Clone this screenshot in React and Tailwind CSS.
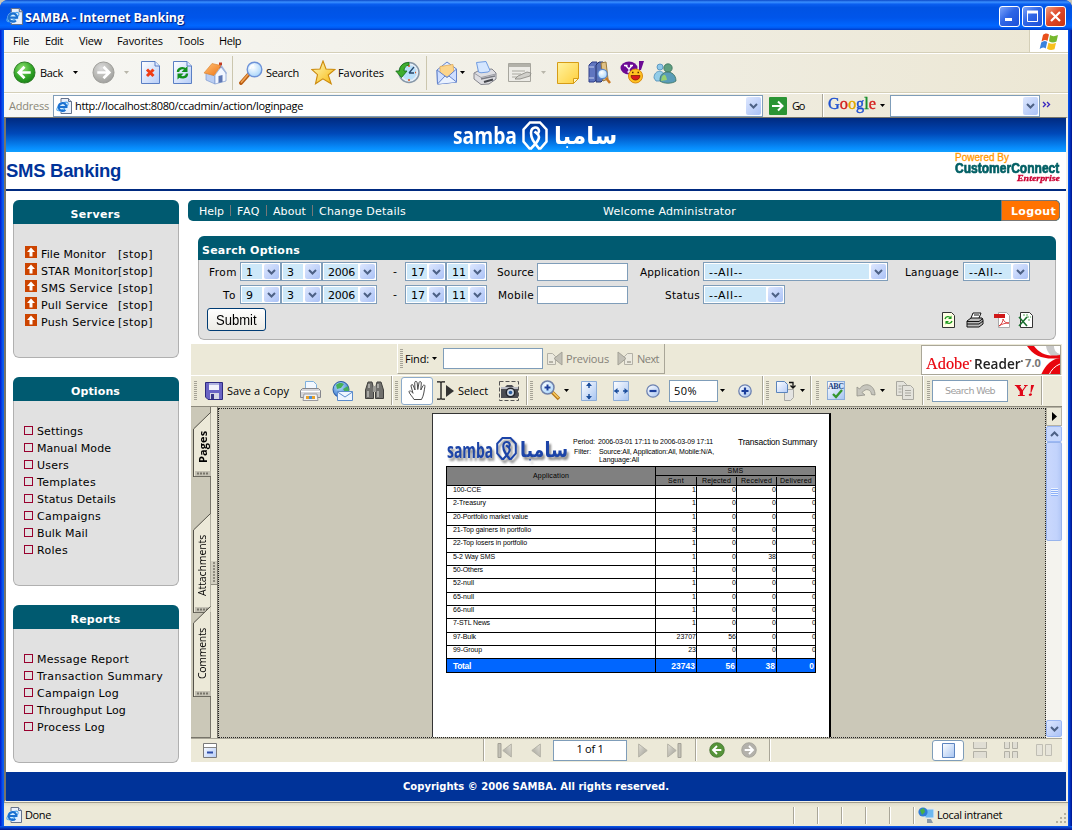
import { useLayoutEffect, useRef, useState } from "react";

/* One-line label whose tracking is adjusted so that it fills exactly w pixels. */
function Fit({ w, low, className = "", children }) {
  const ref = useRef(null);
  const [ls, setLs] = useState(0);
  useLayoutEffect(() => {
    const n = ref.current.textContent.length;
    const natural = ref.current.getBoundingClientRect().width - ls * n;
    setLs((w - natural) / n);
  }, [w]);
  return (
    <span className={"block shrink-0 whitespace-pre " + (low ? "pt-[2px]" : "")} style={{ width: w }}>
      <span ref={ref} className={"block w-max whitespace-pre " + className} style={{ letterSpacing: ls }}>
        {children}
      </span>
    </span>
  );
}

/* Wordmark that is condensed or widened horizontally to w pixels. */
function Squeeze({ w, className = "", children }) {
  const ref = useRef(null);
  const [k, setK] = useState(1);
  useLayoutEffect(() => {
    setK(w / ref.current.offsetWidth);
  }, [w]);
  return (
    <span className="block shrink-0 whitespace-pre" style={{ width: w }}>
      <span ref={ref} className={"block w-max origin-left whitespace-pre " + className} style={{ transform: `scaleX(${k})` }}>
        {children}
      </span>
    </span>
  );
}

const Svg = ({ w, h, vb, className = "", children }) => (
  <svg width={w} height={h} viewBox={vb || `0 0 ${w} ${h}`} className={"block shrink-0 " + className} fill="none">
    {children}
  </svg>
);

const Defs = () => (
  <svg width="0" height="0" className="absolute">
    <defs>
      <radialGradient id="gGreen" cx=".4" cy=".3" r=".8"><stop offset="0" stopColor="#8fe070" /><stop offset=".55" stopColor="#35a82a" /><stop offset="1" stopColor="#127a12" /></radialGradient>
      <radialGradient id="gGray" cx=".4" cy=".3" r=".8"><stop offset="0" stopColor="#dcdcdc" /><stop offset=".6" stopColor="#b4b4b0" /><stop offset="1" stopColor="#999" /></radialGradient>
      <linearGradient id="gPage" x1="0" y1="0" x2="1" y2="1"><stop offset="0" stopColor="#fff" /><stop offset="1" stopColor="#b6cdf8" /></linearGradient>
      <linearGradient id="gFit" x1="0" y1="0" x2="1" y2="1"><stop offset="0" stopColor="#fff" /><stop offset="1" stopColor="#a6c4f2" /></linearGradient>
      <linearGradient id="gRoof" x1="0" y1="0" x2="1" y2="1"><stop offset="0" stopColor="#ffc277" /><stop offset="1" stopColor="#ef7414" /></linearGradient>
      <linearGradient id="gStar" x1="0" y1="0" x2="1" y2="1"><stop offset="0" stopColor="#fffbc0" /><stop offset="1" stopColor="#f7b70a" /></linearGradient>
      <radialGradient id="gLens" cx=".4" cy=".35" r=".7"><stop offset="0" stopColor="#fff" /><stop offset="1" stopColor="#a4d4fb" /></radialGradient>
      <linearGradient id="gNote" x1="0" y1="0" x2="1" y2="1"><stop offset="0" stopColor="#fff3a0" /><stop offset="1" stopColor="#ffcf3c" /></linearGradient>
      <linearGradient id="gGrayTri" x1="0" y1="0" x2="1" y2="1"><stop offset="0" stopColor="#e4e2d8" /><stop offset="1" stopColor="#9d9c94" /></linearGradient>
      <radialGradient id="gGlobe" cx=".4" cy=".3" r=".8"><stop offset="0" stopColor="#bfe6ff" /><stop offset="1" stopColor="#1c5fc4" /></radialGradient>
    </defs>
  </svg>
);

const Caret = ({ className = "", c = "#000" }) => (
  <Svg w={5} h={3} className={className}><path d="M0 0h5L2.500 3z" fill={c} /></Svg>
);
const Grip = ({ className = "" }) => (
  <div className={"h-[20px] w-[3px] shrink-0 bg-[repeating-linear-gradient(to_bottom,#a5a296_0_1px,#ece9d8_1px_2px)] " + className} />
);
const Sep = ({ className = "" }) => <div className={"w-[2px] shrink-0 self-stretch border-l border-r border-l-[#a9a698] border-r-white " + className} />;

const IeIcon = ({ s = 16, className = "" }) => (
  <Svg w={s} h={s} vb="0 0 16 16" className={className}>
    <path d="M5 .5h7.500l3 3v12H5z" fill="#e9f0fc" stroke="#64728c" />
    <path d="M12.500.5v3h3" stroke="#64728c" fill="#c9d8f2" />
    <circle cx="6.500" cy="9" r="5.200" fill="#d9efff" />
    <ellipse cx="6.500" cy="8.500" rx="6.500" ry="2.600" transform="rotate(-35 6.500 8.500)" stroke="#4fa8ee" strokeWidth="1.100" />
    <path d="M3 9h7.400a3.900 3.900 0 1 0-1.100 2.700" stroke="#1b70d0" strokeWidth="2.100" />
  </Svg>
);
const CircleArrow = ({ s, fill, ring, left, className = "" }) => (
  <Svg w={s} h={s} vb="0 0 24 24" className={className}>
    <circle cx="12" cy="12" r="11" fill={fill} stroke={ring} />
    <g transform={left ? "" : "matrix(-1 0 0 1 24 0)"}><path d="M18.500 12H7M12 6l-6 6 6 6" stroke="#fff" strokeWidth="2.800" /></g>
  </Svg>
);
const PageBase = () => (
  <>
    <path d="M.5.5h13.500l4.500 4.500v17.500h-18z" fill="url(#gPage)" stroke="#5a7fc4" />
    <path d="M14 .5v4.500h4.500" fill="#dce8ff" stroke="#5a7fc4" />
  </>
);
const Home = ({ className }) => (
  <Svg w={24} h={24} className={className}>
    <path d="M16 1.500h3v6h-3z" fill="#c23a22" />
    <path d="M3 12l9 3v8l-9-4z" fill="#b9cdf2" stroke="#7d99ce" strokeWidth=".7" />
    <path d="M12 14l6-8 5 6v8l-11 3z" fill="#f3f7ff" stroke="#7d99ce" strokeWidth=".7" />
    <path d="M15.500 15l4-1v7l-4 1z" fill="#5f78b4" />
    <path d="M1 12L9 2.500 18 4.500 11 14.500z" fill="url(#gRoof)" stroke="#d9822e" strokeWidth=".6" />
    <path d="M18 4.500l5.500 8" stroke="#9fb4dc" strokeWidth="1.500" />
  </Svg>
);
const Lens = ({ className }) => (
  <Svg w={24} h={24} className={className}>
    <path d="M10 13l-8 9" stroke="#b85c12" strokeWidth="3.800" strokeLinecap="round" />
    <path d="M9.500 13l-7 8" stroke="#f2a452" strokeWidth="1.700" strokeLinecap="round" />
    <circle cx="15.500" cy="8.500" r="7.300" fill="url(#gLens)" stroke="#6d92d8" strokeWidth="1.400" />
    <path d="M11 8a4.500 4.500 0 0 1 4-4" stroke="#fff" strokeWidth="1.500" />
  </Svg>
);
const Star = ({ className }) => (
  <Svg w={25} h={25} className={className}>
    <path d="M12 1l3 8 9 .4-6.800 5.600 3 8.800-8.300-5-7.400 5 2-9.200L.8 9.400l8.200-.4z" fill="url(#gStar)" stroke="#cc8a0c" strokeWidth="1.100" />
  </Svg>
);
const History = ({ className }) => (
  <Svg w={25} h={23} className={className}>
    <circle cx="14" cy="11.500" r="10" fill="#e8f4ff" stroke="#8898a8" strokeWidth="1.500" />
    <circle cx="14" cy="11.500" r="7.800" fill="#b9e0fb" stroke="#dfe8f0" />
    <path d="M14 12l5-6M14 12h5" stroke="#27486e" strokeWidth="1.300" />
    <path d="M14 4v2M14 18v2M21 11.500h-1" stroke="#e0541c" strokeWidth="1.500" />
    <path d="M14 1.500C8 1.500 4.500 5 4.500 10H.8l5.700 6.500 5.500-6.500H9c0-3 1.500-5.500 5-6z" fill="#3fae2e" stroke="#187418" strokeWidth=".9" />
  </Svg>
);
const Mail = ({ className }) => (
  <Svg w={22} h={24} className={className}>
    <path d="M1 9l10-8 9.500 7v13l-19 2z" fill="#dfeaff" stroke="#6484cc" />
    <path d="M4 5.500l13-2 1 9-7 4-7-4z" fill="#fcd58c" stroke="#e0a64a" strokeWidth=".7" />
    <path d="M1 9l10 7.500L20.500 8v13l-19 2z" fill="#cfdfff" stroke="#6484cc" />
    <path d="M1.500 23l7.500-8 2 1.500 2-1.500 7.500 6" stroke="#6484cc" fill="#eaf2ff" />
  </Svg>
);
const Printer = ({ className }) => (
  <Svg w={24} h={24} className={className}>
    <path d="M1 12l6-3 12-1 4 4v6l-7 5-8 .5L1 18z" fill="#dedee2" stroke="#84858c" />
    <path d="M5.500 11L3.500 1.500 13 .5l4 9-2 1.500-7 .8z" fill="#d4e6ff" stroke="#6f9be0" />
    <path d="M1 12l7 4.500 15-3.500" stroke="#9b9ca4" />
    <path d="M8 18l14-3" stroke="#7a7c84" strokeWidth="1.400" />
    <path d="M11 21l9-2.500" stroke="#44464c" strokeWidth="2.200" />
  </Svg>
);
const EditPage = ({ className }) => (
  <Svg w={24} h={20} className={className}>
    <path d="M.5 .5h22v18h-22z" fill="#ecebe6" stroke="#a7a69e" />
    <path d="M1 1h21v3H1z" fill="#b2b1a9" />
    <path d="M4 8h13M4 11h9M4 14h5" stroke="#a9a8a0" />
    <path d="M7 16l3-3 9-4 4 1-1 3-10 3z" fill="#d0cfca" stroke="#85847e" strokeWidth=".8" />
  </Svg>
);
const Note = ({ className }) => (
  <Svg w={22} h={22} className={className}>
    <path d="M.5.5h21v16l-5 5H.5z" fill="url(#gNote)" stroke="#d69c16" />
    <path d="M16.500 21.500v-5h5z" fill="#fff6c4" stroke="#d69c16" />
  </Svg>
);
const Books = ({ className }) => (
  <Svg w={23} h={23} className={className}>
    <path d="M1 4l3-3h5v17l-3 3H1z" fill="#6076c0" stroke="#303f88" />
    <path d="M1 6h5M1 17h5" stroke="#c6cff0" />
    <path d="M8 4l3-3h4v18l-2 2H8z" fill="#5a72b8" stroke="#26346e" />
    <path d="M13 2l5-1 2 17-5 2z" fill="#e0c184" stroke="#9b7a3c" />
    <circle cx="14.500" cy="13" r="4.700" fill="url(#gLens)" stroke="#5a86cc" strokeWidth="1.200" />
    <path d="M18 17l4 5" stroke="#c97820" strokeWidth="2.500" />
  </Svg>
);
const YahooMsg = ({ className }) => (
  <Svg w={25} h={23} className={className}>
    <ellipse cx="9" cy="7" rx="8.500" ry="6.500" fill="#6c0a94" />
    <path d="M4 4.500h3.500M10 4.500h3M5.500 4.500L9 8l3-3.500M9 8v3M7.500 11h3" stroke="#fff" strokeWidth="1.300" />
    <path d="M19 0h5l-3 9h-2z" fill="#6c0a94" />
    <circle cx="15.500" cy="15" r="7" fill="#ffc322" stroke="#d98a10" />
    <path d="M12 11.500h1.500M17.500 11.500H19" stroke="#5a2c00" strokeWidth="1.600" />
    <path d="M11 14.500h9c0 6-9 6-9 0z" fill="#d81c1c" stroke="#7a1000" strokeWidth=".7" />
  </Svg>
);
const Buddies = ({ className }) => (
  <Svg w={24} h={22} className={className}>
    <circle cx="7" cy="5" r="3" fill="#8fc8ea" stroke="#4b8cb8" strokeWidth=".8" />
    <path d="M1 16c0-9 11-9 11 0v3H3z" fill="#93cde8" stroke="#4b8cb8" strokeWidth=".8" />
    <circle cx="15" cy="6" r="4.200" fill="#5f9f80" stroke="#38705c" strokeWidth=".8" />
    <path d="M7 19c-1-12 16-12 16 0-4 3-12 3-16 0z" fill="#5a9cb8" stroke="#38705c" strokeWidth=".8" />
    <path d="M8 19c1-8 5-8 6-1z" fill="#97d070" />
  </Svg>
);
const WinFlag = () => (
  <Svg w={20} h={19}>
    <path d="M4 3c2-2 4-2 6-.5L8.500 9c-2-1.500-4-1-6 .5z" fill="#e8501c" />
    <path d="M11 3c2 1.500 5 1.500 8 0l-1.500 6.500c-3 1.500-5 1.200-7.500-.2z" fill="#76b82e" />
    <path d="M2.200 10.500c2-1.500 4-2 6-.5L6.700 16.500c-2-1.500-4-1-6 .5z" fill="#3a82dc" />
    <path d="M9.500 10.800c2 1.300 5 1.300 7.500 0l-1.500 6.500c-3 1.200-5 1-7.500-.5z" fill="#f8c01c" />
  </Svg>
);

const TitleButton = ({ red, children }) => (
  <div className={"flex h-[21px] w-[21px] shrink-0 items-center justify-center rounded-[3px] border border-white " + (red ? "bg-[linear-gradient(135deg,#f0a080,#e0482a_45%,#c8340f)]" : "bg-[linear-gradient(135deg,#7da4fa,#2f66e6_45%,#1c4fd8)]")}>
    {children}
  </div>
);

const Chevron = () => (
  <Svg w={9} h={6}><path d="M1 1l3.500 3.500L8 1" stroke="#4d6185" strokeWidth="2" /></Svg>
);
const DropBtn = ({ className }) => (
  <div className={"flex shrink-0 items-center justify-center rounded-[2px] bg-[linear-gradient(135deg,#dde7fe,#abc2f6)] " + className}><Chevron /></div>
);
const Select = ({ w, text, tw, className = "" }) => (
  <div className={"flex h-[19px] shrink-0 items-stretch border border-[#7f9db9] bg-white p-px " + className} style={{ width: w }}>
    <div className="flex min-w-0 flex-1 items-center bg-[#cde8f9] pl-[4px]"><Fit low w={tw} className="text-[11px] leading-[13px]">{text}</Fit></div>
    <DropBtn className="ml-[2px] w-[15px]" />
  </div>
);

const Emblem = ({ w, h, c, className = "" }) => (
  <Svg w={w} h={h} vb="0 0 26 29" className={className}>
    <path d="M10 27.500H7.500L1.500 20.500v-12L8 1.500h10l6.500 7v12l-6 7H16" stroke={c} strokeWidth="2.500" />
    <path d="M9 27.500c7-7 8-9 8-11.500 0-3-3-4-4.500-5.500" stroke={c} strokeWidth="2.600" />
    <path d="M17 27.500C11 20 9 17 9 12c0-7 8-7 8-2 0 1.500-1 2.500-2 3.500" stroke={c} strokeWidth="2.600" />
  </Svg>
);

const Panel = ({ title, tw, className, children }) => (
  <section className={"flex w-[166px] flex-col overflow-hidden rounded-[6px] bg-[#e1e1e1] " + className}>
    <div className="flex h-[24px] shrink-0 items-center justify-center bg-[#005a70] pr-px pt-[4px] text-white"><Fit low w={tw} className="text-[11px] font-bold leading-[14px]">{title}</Fit></div>
    <div className="flex-1 rounded-b-[6px] border border-t-0 border-[#b0b0b0] pt-[21px]">{children}</div>
  </section>
);

const servers = [["File Monitor", 65], ["STAR Monitor", 77], ["SMS Service", 72], ["Pull Service", 67], ["Push Service", 74]];
const options = [["Settings", 46], ["Manual Mode", 74], ["Users", 32], ["Templates", 59], ["Status Details", 79], ["Campaigns", 64], ["Bulk Mail", 51], ["Roles", 31]];
const reports = [["Message Report", 92], ["Transaction Summary", 126], ["Campaign Log", 82], ["Throughput Log", 89], ["Process Log", 68]];

const LinkList = ({ items }) =>
  items.map(([t, w]) => (
    <div key={t} className="flex h-[17px] items-center pl-[10px]">
      <div className="h-[9px] w-[9px] shrink-0 border border-[#98002e]" />
      <div className="w-[4px]" />
      <Fit low w={w} className="text-[11px] leading-[17px]">{t}</Fit>
    </div>
  ));

const rows = [
  ["100-CCE", 28, "1", "0", "0", "0", 13], ["2-Treasury", 33, "1", "0", "0", "0", 14], ["20-Portfolio market value", 75, "1", "0", "0", "0", 13],
  ["21-Top gainers in portfolio", 78, "3", "0", "0", "0", 13], ["22-Top losers in portfolio", 74, "1", "0", "0", "0", 14], ["5-2 Way SMS", 42, "1", "0", "38", "0", 13],
  ["50-Others", 30, "1", "0", "0", "0", 13], ["52-null", 21, "1", "0", "0", "0", 14], ["65-null", 21, "1", "0", "0", "0", 13], ["66-null", 21, "1", "0", "0", "0", 13],
  ["7-STL News", 37, "1", "0", "0", "0", 14], ["97-Bulk", 23, "23707", "56", "0", "0", 13], ["99-Group", 29, "23", "0", "0", "0", 13],
];

const Report = () => (
  <div className="ml-[213px] mt-[4px] h-[330px] w-[399px] border border-[#333] border-r-2 border-r-black bg-white font-['Liberation_Sans',Arial,sans-serif] text-black">
    <div className="flex h-[52px] pl-[14px]">
      <div className="flex h-[52px] w-[121px] items-start pt-[20px] text-[#1c44a8] drop-shadow-[2px_3px_1px_rgba(60,60,60,0.6)]">
        <Squeeze w={46} className="font-['Open_Sans',sans-serif] text-[22px] font-bold leading-[31px]">samba</Squeeze>
        <Emblem w={21} h={27} c="#1c44a8" className="ml-[3px] mt-px" />
        <div className="ml-[3px] mt-[3px]"><Squeeze w={48} className="font-['DejaVu_Sans',sans-serif] text-[21px] font-bold leading-[26px]">سامبا</Squeeze></div>
      </div>
      <div className="ml-[5px] flex w-[165px] flex-col pt-[24px] text-[7px] leading-[8px]">
        <div className="flex"><Fit w={22}>Period:</Fit><div className="w-[3px]" /><Fit w={115}>2006-03-01 17:11 to 2006-03-09 17:11</Fit></div>
        <div className="mt-[2px] flex"><div className="w-px" /><Fit w={17}>Filter:</Fit><div className="w-[8px]" /><div><Fit w={115}>Source:All, Application:All, Mobile:N/A,</Fit><Fit w={40}>Language:All</Fit></div></div>
      </div>
      <div className="pt-[23px]"><Fit w={79} className="text-[8.500px] leading-[10px]">Transaction Summary</Fit></div>
    </div>
    <div className="ml-[13px] w-[370px] border-l border-r border-black text-[7px] leading-[8px]">
      <div className="flex h-[20px] border-b border-t border-black bg-[#808080]">
        <div className="flex w-[208px] items-center justify-center"><Fit w={36}>Application</Fit></div>
        <div className="flex flex-1 flex-col border-l border-black">
          <div className="flex h-[9px] items-center justify-center border-b border-black"><Fit w={16}>SMS</Fit></div>
          <div className="flex flex-1 items-center">
            <div className="flex w-[41px] justify-center border-r border-black"><Fit w={16}>Sent</Fit></div>
            <div className="flex w-[40px] justify-center border-r border-black"><Fit w={29}>Rejected</Fit></div>
            <div className="flex w-[40px] justify-center border-r border-black"><Fit w={31}>Received</Fit></div>
            <div className="flex flex-1 justify-center"><Fit w={32}>Delivered</Fit></div>
          </div>
        </div>
      </div>
      {rows.map(([t, w, a, b, c, d, h]) => (
        <div key={t} className="flex border-b border-black" style={{ height: h }}>
          <div className="w-[208px] pl-[6px]"><Fit w={w}>{t}</Fit></div>
          <div className="w-[42px] border-l border-r border-black text-right">{a}</div>
          <div className="w-[40px] border-r border-black text-right">{b}</div>
          <div className="w-[40px] border-r border-black text-right">{c}</div>
          <div className="-mr-px flex-1 text-right">{d}</div>
        </div>
      ))}
      <div className="flex h-[14px] items-stretch border-b border-black bg-[#0066ff] text-[8.500px] font-bold leading-[14px] text-white">
        <div className="w-[208px] pl-[6px]"><Fit w={18}>Total</Fit></div>
        <div className="w-[42px] border-l border-r border-black pr-px text-right">23743</div>
        <div className="w-[40px] border-r border-black pr-px text-right">56</div>
        <div className="w-[40px] border-r border-black pr-px text-right">38</div>
        <div className="flex-1 pr-px text-right">0</div>
      </div>
    </div>
  </div>
);

const SideTab = ({ h, label, w, bold, className = "" }) => (
  <div className={"relative flex w-[18px] shrink-0 justify-center " + className} style={{ height: h }}>
    <svg width="18" height={h} className="absolute left-0 top-0" fill="none">
      <path d={`M17.500 .5L1 17v${h - 19}h16.500z`} fill="#ece9d8" />
      <path d={`M2 ${h - 7}h15.500v5H2z`} fill="#c4c1b4" />
      <path d={`M17.500 .5L.5 17v${h - 18}`} stroke="#55534a" />
      <path d={`M1 ${h - 1.5}h17`} stroke="#6c6a60" />
      <path d={`M4 ${h - 4.5}h12`} stroke="#77756a" strokeWidth="2" strokeDasharray="2 1" />
    </svg>
    <div className={"relative rotate-180 [writing-mode:vertical-rl] whitespace-nowrap leading-[17px] " + (bold ? "font-bold " : "") + w}>{label}</div>
  </div>
);

const PdfToolbar = () => (
  <div className="flex h-[32px] items-center border-b border-t border-b-[#8c897c] border-t-white bg-[#ece9d8] pb-px pl-[3px]">
    <Grip />
    <Svg w={19} h={18} className="ml-[8px]">
      <path d="M.5.5h17v17H3l-2.500-2.500z" fill="#6a64c4" stroke="#2e2a80" />
      <path d="M4 1h10v7H4z" fill="#f2f2fa" /><path d="M4 1h10v2H4z" fill="#b0b4e0" />
      <path d="M5 11h9v6H5z" fill="#d8d8e4" /><path d="M6 12h3v5H6z" fill="#3a3688" />
    </Svg>
    <div className="ml-[3px]"><Fit w={62} className="text-[11px] leading-[14px]">Save a Copy</Fit></div>
    <Svg w={21} h={20} className="ml-[11px]">
      <path d="M5.500 8V.5h8l3 3V8z" fill="#f2f8ff" stroke="#7fb0dc" />
      <path d="M.5 9.500l2-2h16l2 2v7h-20z" fill="#d5d5d8" stroke="#85868c" />
      <path d="M1 10.500h19" stroke="#fff" /><path d="M4 13h13l1 6.500H3z" fill="#f2f2f2" stroke="#9a9aa0" /><path d="M6 15h9v3H6z" fill="#e8a028" /><path d="M9 15h3v3H9z" fill="#4a90d8" />
    </Svg>
    <Svg w={21} h={20} className="ml-[11px]">
      <circle cx="9" cy="8.500" r="8" fill="url(#gGlobe)" stroke="#2858a0" />
      <path d="M4 4c3-3 6-2 8-1l-3 4-4 1zM11 8l5-3 1 5-4 1z" fill="#46b058" />
      <path d="M5.500 10.500h15v9h-15z" fill="#eef5ff" stroke="#5c8ccc" /><path d="M5.500 11l7.500 5 7.500-5" stroke="#5c8ccc" />
    </Svg>
    <Svg w={19} h={19} className="ml-[12px]">
      <path d="M3 1h4l1.500 6v10.500H.5V9z" fill="#70706c" stroke="#40403e" /><path d="M16 1h-4l-1.500 6v10.500h8V9z" fill="#70706c" stroke="#40403e" />
      <path d="M8 5h3v6H8z" fill="#9a9a94" /><path d="M3 10v6M13 10v6M4 3v4M13 3v4" stroke="#c8c8c4" strokeWidth="1.300" />
    </Svg>
    <Sep className="ml-[7px]" /><Grip className="ml-[2px]" />
    <div className="ml-[3px] flex h-[28px] w-[32px] shrink-0 items-center justify-center rounded-[3px] border border-[#8caaca] bg-white">
      <Svg w={19} h={21}>
        <path d="M6 19.500C4.500 16.500 1 13.500 1 11.500c.8-1.600 3 .3 4 1.800L3 6c0-1.800 1.800-2 2.300-.3L7 10 6.700 2.800c0-1.900 2.300-1.900 2.500 0L9.800 9.500 11 2.600c.4-1.600 2.400-1.300 2.300.4L12.800 10l2.200-4.300c.9-1.400 2.300-.6 1.900 1C16 11 16 15 13.500 19.500z" fill="#fff" stroke="#4c4c4c" />
      </Svg>
    </div>
    <Svg w={18} h={19} className="ml-[4px]">
      <path d="M0 .8h3l1 .7 1-.7h3M0 18.200h3l1-.7 1 .7h3M4 1v17" stroke="#111" strokeWidth="1.300" /><path d="M9 4v12l8-6z" fill="#333" />
    </Svg>
    <div className="ml-[3px]"><Fit w={30} className="text-[11px] leading-[14px]">Select</Fit></div>
    <Svg w={21} h={20} className="ml-[11px]">
      <path d="M.5.5h19v19h-19z" stroke="#555" strokeDasharray="4 2" />
      <path d="M2 6h4l2-2h5l2 2h4v11H2z" fill="#4a4c52" /><path d="M2 6h17v2H2z" fill="#b9bcc4" /><circle cx="11.500" cy="11.500" r="4.200" fill="#cdd8e6" stroke="#23262c" strokeWidth="1.500" /><circle cx="11.500" cy="11.500" r="1.800" fill="#2c5c9c" />
    </Svg>
    <Sep className="ml-[6px]" /><Grip className="ml-[2px]" />
    <Svg w={21} h={21} className="ml-[7px]">
      <path d="M12 12l7 7" stroke="#b87818" strokeWidth="3.600" /><path d="M12.500 12l6 6" stroke="#f8cc60" strokeWidth="1.500" />
      <circle cx="7.500" cy="7.500" r="6.500" fill="url(#gLens)" stroke="#7080a8" strokeWidth="1.500" /><path d="M4.500 7.500h6M7.500 4.500v6" stroke="#1c3f9c" strokeWidth="2" />
    </Svg>
    <Caret className="ml-[3px]" />
    <Svg w={16} h={20} className="ml-[12px]"><path d="M.5.5h15v19H.5z" fill="url(#gFit)" stroke="#8cacd8" /><path d="M8 2v5M8 18v-5" stroke="#1c4f9c" strokeWidth="1.500" /><path d="M5 5l3-3.500L11 5zM5 15l3 3.500 3-3.500z" fill="#1c4f9c" /></Svg>
    <Svg w={16} h={20} className="ml-[16px]"><path d="M.5.5h15v19H.5z" fill="url(#gFit)" stroke="#8cacd8" /><path d="M1.500 10H6M14.500 10H10" stroke="#1c4f9c" strokeWidth="1.500" /><path d="M4.500 7L1 10l3.500 3zM11.500 7l3.500 3-3.500 3z" fill="#1c4f9c" /></Svg>
    <Svg w={14} h={14} className="ml-[17px]"><circle cx="7" cy="7" r="6.200" fill="url(#gFit)" stroke="#6d82b0" strokeWidth="1.300" /><path d="M3.500 7h7" stroke="#1c3f9c" strokeWidth="2.200" /></Svg>
    <div className="ml-[9px] flex h-[22px] w-[49px] shrink-0 items-center border border-[#7f9db9] bg-white pl-[4px]"><Fit w={23} className="text-[11px] leading-[14px]">50%</Fit></div>
    <Caret className="ml-[2px]" />
    <Svg w={14} h={14} className="ml-[13px]"><circle cx="7" cy="7" r="6.200" fill="url(#gFit)" stroke="#6d82b0" strokeWidth="1.300" /><path d="M3.500 7h7M7 3.500v7" stroke="#1c3f9c" strokeWidth="2.200" /></Svg>
    <Sep className="ml-[10px]" /><Grip className="ml-[2px]" />
    <Svg w={20} h={20} className="ml-[7px]">
      <path d="M8.500 8.500h9v8l-3 3h-6z" fill="#e4e4e2" stroke="#a8a8a4" /><path d="M.5.5h8l3 3v8H.5z" fill="url(#gPage)" stroke="#5a84bc" /><path d="M13 1.500h4v5M14.500 4.500l2.500 2.500 2.500-2.500" stroke="#111" strokeWidth="1.300" />
    </Svg>
    <Caret className="ml-[4px]" />
    <Sep className="ml-[5px]" /><Grip className="ml-[4px]" />
    <Svg w={18} h={19} className="ml-[8px]">
      <rect x=".5" y=".5" width="17" height="18" fill="url(#gFit)" stroke="#8cacd8" />
      <text x="9" y="8" textAnchor="middle" fontSize="8" fontWeight="bold" fontFamily="Liberation Serif" textLength="16" fill="#1c3f80">ABC</text>
      <path d="M6 13l3 3 6-7" stroke="#35962c" strokeWidth="2.300" />
    </Svg>
    <Svg w={20} h={15} className="ml-[11px]"><path d="M1 4v9l8-1-3-2.500c4-5 9-3 9.500 2L19 12C19 2 9-2 3.500 6z" fill="#c6c5bd" stroke="#98978f" strokeWidth=".9" /></Svg>
    <Caret className="ml-[4px]" />
    <Svg w={19} h={19} className="ml-[11px]">
      <path d="M.5.5h7l3 3v11H.5z" fill="#e4e3dc" stroke="#a9a8a0" /><path d="M6.500 4.500h8l3 3v11h-11z" fill="#e4e3dc" stroke="#a9a8a0" /><path d="M9 9.500h6M9 12h6M9 14.500h6M2.500 5h3M2.500 8h3M2.500 11h3" stroke="#a9a8a0" />
    </Svg>
    <Sep className="ml-[7px]" /><Grip className="ml-[3px]" />
    <div className="ml-[2px] flex h-[22px] w-[76px] shrink-0 items-center justify-center border border-[#7f9db9] bg-white text-[#a0a0a0]"><Fit w={50} className="text-[9.500px] leading-[12px] font-['DejaVu_Sans',sans-serif]">Search Web</Fit></div>
    <div className="ml-[7px]"><Squeeze w={20} className="font-['DejaVu_Serif','Liberation_Serif',serif] text-[14px] font-bold leading-[18px] text-[#e00818]">Y<span className="italic">!</span></Squeeze></div>
    <Sep className="ml-[6px]" />
  </div>
);

const Tri = ({ flip, bar, className }) => (
  <Svg w={bar ? 15 : 10} h={15} className={className}>
    <g transform={flip ? `matrix(-1 0 0 1 ${bar ? 15 : 10} 0)` : ""}>
      <path d="M.7 1v13l8.500-6.500z" fill="url(#gGrayTri)" stroke="#b3b1a6" />{bar && <path d="M11 .5h3v14h-3z" fill="#c2c0b6" stroke="#a3a196" />}
    </g>
  </Svg>
);
const FindArrow = ({ flip, className }) => (
  <Svg w={16} h={15} className={className}>
    <g transform={flip ? "matrix(-1 0 0 1 16 0)" : ""}>
      <path d="M.5 2.500h5l3 3v8h-8z" fill="#eceadf" stroke="#b3b1a6" /><path d="M2 11h4" stroke="#a3a196" strokeWidth="1.500" /><path d="M15 1v13L7 7.500z" fill="#c2c0b6" stroke="#a3a196" />
    </g>
  </Svg>
);

const PdfViewer = () => (
  <div className="ml-[3px] mt-[4px] flex h-[418px] w-[871px] flex-col bg-[#ece9d8] font-['Open_Sans',Tahoma,sans-serif]">
    <div className="flex h-[31px] pl-[206px]">
      <div className="flex h-[30px] w-[268px] items-center border-b border-l border-r border-b-[#a9a698] border-l-white border-r-[#a9a698]">
        <Grip className="ml-[2px]" />
        <div className="ml-[2px]"><Fit w={24} className="text-[11px] leading-[14px]">Find:</Fit></div>
        <Caret className="ml-[3px]" />
        <div className="ml-[6px] h-[21px] w-[100px] shrink-0 border border-[#7f9db9] bg-white" />
        <FindArrow className="ml-[4px]" />
        <div className="ml-[3px] text-[#858278]"><Fit w={43} className="text-[11px] leading-[14px]">Previous</Fit></div>
        <FindArrow flip className="ml-[8px]" />
        <div className="ml-[4px] text-[#858278]"><Fit w={22} className="text-[11px] leading-[14px]">Next</Fit></div>
      </div>
      <div className="relative ml-[256px] mt-px flex h-[30px] w-[140px] shrink-0 items-center overflow-hidden border border-[#aaa798] bg-white pl-[4px] pt-[4px]">
        <svg width="46" height="30" viewBox="0 0 46 30" className="absolute right-0 top-0" fill="none">
          <path d="M32 0h8c0 4 2 7 6 8v5C39 12 33 8 32 0z" fill="#c9c9c9" />
          <path d="M20 0c6 8 14 11 26 9v3C32 14 20 11 13 0z" fill="#e8050e" />
          <path d="M46 12C38 13 31 19 27 29h19V17z" fill="#e8050e" />
          <path d="M46 18c-5 2-9 6-11 11" stroke="#fff" strokeWidth="1" />
        </svg>
        <div className="relative"><Squeeze w={46} className="font-['Liberation_Serif',serif] text-[17px] leading-[20px] text-[#e8050e] [-webkit-text-stroke:0.2px]">Adobe<span className="align-[6px] text-[7px]">•</span></Squeeze></div>
        <div className="relative ml-[2px]"><Squeeze w={49} className="font-['Open_Sans',sans-serif] text-[15px] font-semibold leading-[20px] text-[#222]">Reader<span className="align-[5px] text-[7px]">•</span></Squeeze></div>
        <div className="relative ml-[2px] mt-[2px]"><Fit w={16} className="text-[11px] font-bold leading-[16px] text-[#777]">7.0</Fit></div>
      </div>
    </div>
    <PdfToolbar />
    <div className="flex h-[331px]">
      <div className="flex w-[20px] shrink-0 flex-col border-b border-r border-[#77746a] bg-[#cbc8b8] pt-[5px]">
        <SideTab h={66} label="Pages" bold className="ml-[2px]" w="mt-[15px] h-[36px] text-[11px] tracking-[0.1px]" />
        <SideTab h={101} label="Attachments" className="ml-[2px] mt-[35px]" w="mt-[21px] h-[62px] text-[10.5px] -tracking-[0.1px]" />
        <SideTab h={92} label="Comments" className="-mt-[8px] ml-[2px]" w="mt-[23px] h-[50px] text-[10.5px] -tracking-[0.3px]" />
      </div>
      <div className="flex w-[6px] shrink-0 flex-col bg-[#ece9d8] pt-[154px]">
        <div className="flex h-[24px] justify-center border-b border-[#908d80] bg-[#d2cfc0] pt-px"><div className="h-[20px] w-[2px] bg-[repeating-linear-gradient(to_bottom,#8f8c80_0_2px,#d2cfc0_2px_3px)]" /></div>
      </div>
      <div className="h-[331px] w-[829px] shrink-0 overflow-hidden border-l border-[#77746a] bg-[#cbc8b8] pt-px">
        <div className="h-[330px] w-[828px] overflow-hidden border border-dotted border-[#222]"><Report /></div>
      </div>
      <div className="flex flex-1 flex-col bg-[#f4f3ee]">
        <div className="flex h-[19px] items-center justify-center border border-[#b5b2a4] bg-[#ece9d8]"><Svg w={5} h={9}><path d="M0 0v9l5-4.500z" fill="#000" /></Svg></div>
        <div className="flex h-[16px] items-center justify-center rounded-[2px] border border-[#9cb8f4] bg-[#c8d8fc]"><Svg w={9} h={6}><path d="M1 5l3.500-3.500L8 5" stroke="#4d6185" strokeWidth="2" /></Svg></div>
        <div className="flex h-[99px] flex-col items-center justify-center rounded-[2px] border border-[#98b4ec] bg-[linear-gradient(to_right,#cad8fd,#c2d3fc_70%,#b4c8f6)]"><div className="h-[8px] w-[7px] bg-[repeating-linear-gradient(to_bottom,#eef4fe_0_1px,#8cb0f8_1px_2px)]" /></div>
        <div className="flex-1" />
        <DropBtn className="mb-px h-[17px] border border-[#9cb8f4]" />
      </div>
    </div>
    <div className="flex h-[24px] items-center border-t border-[#a9a698] pb-px">
      <Svg w={14} h={15} className="ml-[12px]"><path d="M.5.5h13v14H.5z" fill="url(#gPage)" stroke="#7a7a7a" /><path d="M1 1h12v3H1z" fill="#fff" /><path d="M1 4.500h12" stroke="#888" /><path d="M4 9.500h6" stroke="#2c4ca8" strokeWidth="2" /></Svg>
      <Sep className="ml-[266px]" />
      <Tri flip bar className="ml-[12px]" />
      <Tri flip className="ml-[19px]" />
      <div className="ml-[12px] flex h-[21px] w-[74px] shrink-0 items-center justify-center border border-[#7f9db9] bg-white pb-[2px]"><Fit w={27} className="text-[11px] leading-[14px]">1 of 1</Fit></div>
      <Tri className="ml-[11px]" />
      <Tri bar className="ml-[19px]" />
      <Sep className="ml-[13px]" />
      <CircleArrow left s={16} fill="#56943a" ring="#3a6a28" className="ml-[12px]" />
      <CircleArrow s={16} fill="#b3b1ab" ring="#9a9890" className="ml-[16px]" />
      <Sep className="ml-[12px]" />
      <div className="ml-[161px] flex h-[21px] w-[32px] shrink-0 items-center justify-center rounded-[3px] border border-[#7f9db9] bg-white"><Svg w={13} h={15}><path d="M.5.5h12v14H.5z" fill="url(#gFit)" stroke="#5c84c0" /></Svg></div>
      <Svg w={14} h={16} className="ml-[9px]"><path d="M.5 0v6.500h13V0M.5 16V9.500h13V16" fill="#e0ded4" stroke="#b3b1a6" /></Svg>
      <Svg w={14} h={16} className="ml-[17px]"><path d="M.5 0v6.500h5V0M8.500 0v6.500h5V0M.5 16V9.500h5V16M8.500 16V9.500h5V16" fill="#e0ded4" stroke="#b3b1a6" /></Svg>
      <Svg w={17} h={12} className="ml-[18px]"><path d="M.5.5h6v11h-6zM9.500.5h6v11h-6z" fill="#e6e4da" stroke="#c0beb4" /></Svg>
    </div>
  </div>
);

const Input = ({ className = "" }) => <div className={"h-[18px] w-[91px] shrink-0 border border-[#7f9db9] bg-white " + className} />;
const Lbl = ({ w, children, className = "" }) => <div className={className}><Fit w={w} className="text-[10.500px] leading-[14px]">{children}</Fit></div>;

const DateSelects = ({ day }) => (
  <>
    <Select w={41} text={day} tw={6} /><Select w={41} text="3" tw={6} /><Select w={55} text="2006" tw={27} />
    <div className="ml-[16px] w-[12px] text-[11px] leading-[14px]">-</div>
    <Select w={41} text="17" tw={14} /><Select w={41} text="11" tw={14} />
  </>
);

const NavSep = ({ className }) => <div className={"h-[11px] w-px shrink-0 bg-[#777] " + className} />;
const NavItem = ({ w, children, className = "" }) => <div className={className}><Fit low w={w} className="text-[11px] leading-[14px]">{children}</Fit></div>;

const MainArea = () => (
  <main className="ml-[9px] mt-[9px] flex w-[872px] shrink-0 flex-col">
    <nav className="flex h-[21px] shrink-0 items-center overflow-hidden rounded-[5px] bg-[#005a70] text-white">
      <NavItem w={25} className="ml-[11px]">Help</NavItem><NavSep className="ml-[6px]" />
      <NavItem w={23} className="ml-[6px]">FAQ</NavItem><NavSep className="ml-[6px]" />
      <NavItem w={33} className="ml-[6px]">About</NavItem><NavSep className="ml-[6px]" />
      <NavItem w={87} className="ml-[6px]">Change Details</NavItem>
      <NavItem w={133} className="ml-[197px]">Welcome Administrator</NavItem>
      <div className="ml-auto flex h-[21px] w-[59px] items-center rounded-r-[5px] border border-[#777] bg-[#ff7300] pl-[9px]"><Fit low w={45} className="text-[11px] font-bold leading-[14px]">Logout</Fit></div>
    </nav>
    <section className="ml-[10px] mt-[15px] h-[104px] w-[858px] shrink-0 overflow-hidden rounded-[6px] bg-[#e1e1e1]">
      <div className="flex h-[24px] items-center bg-[#005a70] pl-[4px] pt-[3px] text-white"><Fit low w={98} className="text-[11px] font-bold leading-[14px]">Search Options</Fit></div>
      <div className="h-[80px] rounded-b-[6px] border border-t-0 border-[#b0b0b0] pt-[2px]">
        <div className="flex h-[19px] items-center">
          <Lbl w={28} className="ml-[10px] mr-[3px]">From</Lbl>
          <DateSelects day="1" />
          <Lbl w={37} className="ml-[10px]">Source</Lbl><Input className="ml-[3px]" />
          <Lbl w={60} className="ml-[12px]">Application</Lbl>
          <Select w={185} text="--All--" tw={34} className="ml-[3px]" />
          <Lbl w={54} className="ml-[17px]">Language</Lbl>
          <Select w={67} text="--All--" tw={34} className="ml-[4px]" />
        </div>
        <div className="mt-[4px] flex h-[19px] items-center">
          <Lbl w={14} className="ml-[24px] mr-[3px]">To</Lbl>
          <DateSelects day="9" />
          <Lbl w={36} className="ml-[11px]">Mobile</Lbl><Input className="ml-[3px]" />
          <Lbl w={35} className="ml-[37px]">Status</Lbl>
          <Select w={82} text="--All--" tw={34} className="ml-[3px]" />
        </div>
        <div className="mt-[4px] flex items-center">
          <div className="ml-[8px] flex h-[23px] w-[59px] shrink-0 items-center justify-center rounded-[3px] border border-[#003c74] bg-[linear-gradient(to_bottom,#fff,#ecebe5)]"><Squeeze w={41} className="font-['Liberation_Sans',Arial,sans-serif] text-[14px] leading-[16px]">Submit</Squeeze></div>
          <Svg w={13} h={16} className="ml-[676px]"><path d="M.5.5h9l3 3v12H.5z" fill="#ffffe4" stroke="#333" /><path d="M3 7c1-3 4-3 6-1M10 9c-1 3-4 3-6 1" stroke="#1d9a1d" strokeWidth="1.400" /><path d="M9.500 3.500v3.500H6zM3.500 12.500V9H7z" fill="#1d9a1d" /></Svg>
          <Svg w={18} h={16} className="ml-[11px]"><path d="M5 6l2-5h8l-2 5" fill="#fff" stroke="#111" /><path d="M1 9l4-3h11l1 2v4l-4 3H1z" fill="#bbb" stroke="#111" /><path d="M1 9.500h12l4-3M1 12h12l4-3M8 3h5" stroke="#111" /></Svg>
          <Svg w={17} h={16} className="ml-[10px]"><path d="M4.500.5h8l3 3v12h-11z" fill="#fff" stroke="#aaa" /><path d="M0 2h11v4H0z" fill="#d01818" /><path d="M5 14c3-2 4-5 4-7 1 3 3 4 6 4-4 0-7 1-10 3z" stroke="#d01818" strokeWidth=".8" /></Svg>
          <Svg w={16} h={16} className="ml-[7px]"><path d="M2.500.5h9l3 3v12h-12z" fill="#fff" stroke="#333" /><path d="M5 3h6M9 5h4M10 8h3" stroke="#58a858" strokeDasharray="2 1" /><path d="M1 5l8 9M9 5l-8 9" stroke="#1c7030" strokeWidth="1.600" /></Svg>
        </div>
      </div>
    </section>
    <PdfViewer />
  </main>
);

export default function App() {
  return (
    <div className="h-[830px] w-[1072px] overflow-hidden bg-[#c9c6b8] font-['DejaVu_Sans',Verdana,sans-serif] text-black">
      <Defs />
      <div className="flex h-[830px] w-[1072px] flex-col rounded-t-[8px] bg-[linear-gradient(to_right,#0019cf,#0a5cf0_3px,#0a5cf0_1068px,#0046e0_1069px,#00138c)]">
        <header className="flex h-[30px] shrink-0 items-center rounded-t-[8px] bg-[linear-gradient(to_bottom,#0a48c8,#3a90ff_7%,#0a5ff0_14%,#0053e4_25%,#0055ea_60%,#0066ff_85%,#005cf4_92%,#003cc8)] pl-[6px] pr-[6px] pt-[3px]">
          <IeIcon s={17} />
          <div className="ml-[2px] text-white [text-shadow:1px_1px_1px_#00187a]"><Fit low w={159} className="font-['Open_Sans',sans-serif] text-[12.500px] font-bold leading-[18px]">SAMBA - Internet Banking</Fit></div>
          <div className="ml-auto flex gap-[2px]">
            <TitleButton><Svg w={13} h={13}><path d="M2 9.500h7" stroke="#fff" strokeWidth="3" /></Svg></TitleButton>
            <TitleButton><Svg w={13} h={13}><path d="M1.500 2h10v9.500h-10z" stroke="#fff" /><path d="M1 2h11" stroke="#fff" strokeWidth="3" /></Svg></TitleButton>
            <TitleButton red><Svg w={13} h={13}><path d="M2 2l9 9M11 2l-9 9" stroke="#fff" strokeWidth="2.200" /></Svg></TitleButton>
          </div>
        </header>

        <div className="mx-[4px] flex h-[796px] shrink-0 flex-col bg-[#ece9d8]">
          <div className="flex h-[87px] shrink-0 flex-col bg-[linear-gradient(to_right,#f7f7f4,#f0eee4_55%,#ece7d4)] font-['Open_Sans',Tahoma,sans-serif]">
            <div className="flex h-[23px] shrink-0 items-center border-b border-[#d4cfb8]">
              <div className="ml-[9px]"><Fit w={16} className="text-[11px] leading-[16px]">File</Fit></div>
              <div className="ml-[16px]"><Fit w={18} className="text-[11px] leading-[16px]">Edit</Fit></div>
              <div className="ml-[16px]"><Fit w={23} className="text-[11px] leading-[16px]">View</Fit></div>
              <div className="ml-[15px]"><Fit w={46} className="text-[11px] leading-[16px]">Favorites</Fit></div>
              <div className="ml-[15px]"><Fit w={26} className="text-[11px] leading-[16px]">Tools</Fit></div>
              <div className="ml-[15px]"><Fit w={22} className="text-[11px] leading-[16px]">Help</Fit></div>
              <div className="ml-auto flex h-[22px] w-[39px] items-center justify-center border-l border-[#d4cfb8] bg-white"><WinFlag /></div>
            </div>
            <div className="flex h-[40px] shrink-0 items-center border-b border-t border-b-[#d4cfb8] border-t-white pb-px pl-[9px]">
              <CircleArrow left s={23} fill="url(#gGreen)" ring="#2b7a22" />
              <div className="ml-[4px]"><Fit w={23} className="text-[11px] leading-[16px]">Back</Fit></div>
              <Caret className="ml-[10px]" />
              <CircleArrow s={23} fill="url(#gGray)" ring="#9c9c98" className="ml-[14px]" />
              <Caret c="#b8b6aa" className="ml-[9px]" />
              <Svg w={19} h={23} className="ml-[12px]"><PageBase /><path d="M6 8.500l6.500 6.500M12.500 8.500L6 15" stroke="#f03c14" strokeWidth="3" /></Svg>
              <Svg w={19} h={23} className="ml-[13px]"><PageBase /><path d="M5 11c0-4 5-5 8-2.500M14 12.500c0 4-5 5-8 2.500" stroke="#12901e" strokeWidth="2.400" /><path d="M14.500 5v6h-6zM4.500 18.500v-6h6z" fill="#12901e" /></Svg>
              <Home className="ml-[11px]" />
              <div className="ml-[5px] h-[34px] w-px shrink-0 bg-[#cbc6ae]" />
              <Lens className="ml-[6px]" />
              <div className="ml-[3px]"><Fit w={33} className="text-[11px] leading-[16px]">Search</Fit></div>
              <Star className="ml-[12px]" />
              <div className="ml-[2px]"><Fit w={46} className="text-[11px] leading-[16px]">Favorites</Fit></div>
              <History className="ml-[11px]" />
              <div className="ml-[6px] h-[34px] w-px shrink-0 bg-[#cbc6ae]" />
              <Mail className="ml-[9px]" />
              <Caret className="ml-[2px]" />
              <Printer className="ml-[8px]" />
              <EditPage className="ml-[11px]" />
              <Caret c="#b8b6aa" className="ml-[9px]" />
              <Note className="ml-[11px]" />
              <Books className="ml-[9px]" />
              <YahooMsg className="ml-[9px]" />
              <Buddies className="ml-[8px]" />
            </div>
            <div className="flex h-[24px] shrink-0 items-center border-t border-white">
              <div className="ml-[5px] text-[#8a8778]"><Fit w={40} className="text-[11px] leading-[16px]">Address</Fit></div>
              <div className="ml-[4px] flex h-[22px] w-[710px] shrink-0 items-center border border-[#7f9db9] bg-white pl-[2px] pr-px">
                <IeIcon s={16} />
                <div className="ml-[3px]"><Fit w={228} className="text-[11px] leading-[16px]">http://localhost:8080/ccadmin/action/loginpage</Fit></div>
                <DropBtn className="ml-auto h-[18px] w-[15px]" />
              </div>
              <Svg w={18} h={18} className="ml-[6px]"><rect width="18" height="18" rx="1" fill="#2a9434" /><path d="M3 9h10M9 4.500L13.500 9 9 13.500" stroke="#fff" strokeWidth="2" /></Svg>
              <div className="ml-[5px]"><Fit w={12} className="text-[11px] leading-[16px]">Go</Fit></div>
              <Sep className="ml-[18px]" />
              <div className="mb-[3px] ml-[4px]"><Squeeze w={48} className="font-['Liberation_Serif',serif] text-[17px] leading-[20px] [-webkit-text-stroke:0.4px]"><span className="text-[#1c4fd0]">G</span><span className="text-[#d42020]">o</span><span className="text-[#e0a800]">o</span><span className="text-[#1c4fd0]">g</span><span className="text-[#1a9030]">l</span><span className="text-[#d42020]">e</span></Squeeze></div>
              <Caret className="ml-[4px]" />
              <div className="ml-[5px] flex h-[22px] w-[150px] shrink-0 items-center justify-end border border-[#7f9db9] bg-white pr-px"><DropBtn className="h-[18px] w-[15px]" /></div>
              <Svg w={9} h={7} className="mb-[3px] ml-[2px]"><path d="M1 1l2.500 2.500L1 6M5 1l2.500 2.500L5 6" stroke="#3a28c0" strokeWidth="1.400" /></Svg>
            </div>
          </div>

          <div className="flex h-[685px] shrink-0 flex-col border-b-2 border-l-2 border-r-2 border-t border-b-[#f4f2e8] border-l-[#77756a] border-r-[#f4f2e8] border-t-[#77756a] bg-white">
            <div className="flex h-[34px] shrink-0 items-center justify-center bg-[linear-gradient(to_bottom,#002a80,#0048b8_45%,#0890ff_90%,#12a0ff)] pr-[2px] text-white">
              <div className="-mt-[1px]"><Squeeze w={64} className="font-['Open_Sans',sans-serif] text-[23.500px] font-bold leading-[28px]">samba</Squeeze></div>
              <Emblem w={26} h={29} c="#fff" className="ml-[5px]" />
              <div className="ml-[6px] pt-[2px]"><Squeeze w={63} className="font-['DejaVu_Sans',sans-serif] text-[24px] font-bold leading-[30px]">سامبا</Squeeze></div>
            </div>
            <div className="flex h-[39px] shrink-0 items-center border-b-2 border-[#002a80] font-['Liberation_Sans',Arial,sans-serif]">
              <h1 className="text-[#003399]"><Fit w={115} className="text-[18.500px] font-bold leading-[22px]">SMS Banking</Fit></h1>
              <div className="mb-[6px] ml-auto mr-[6px] flex w-[105px] flex-col">
                <Fit w={54} className="text-[10px] leading-[10px] text-[#ff9900] [-webkit-text-stroke:0.3px]">Powered By</Fit>
                <Squeeze w={104} className="font-['Liberation_Sans',sans-serif] text-[14px] font-bold leading-[11px] text-[#005f64] [-webkit-text-stroke:0.7px]">CustomerConnect</Squeeze>
                <div className="flex justify-end"><Squeeze w={43} className="font-['Liberation_Serif',serif] text-[9px] font-bold italic leading-[8px] text-[#cc0033] [-webkit-text-stroke:0.3px]">Enterprise</Squeeze></div>
              </div>
            </div>
            <div className="flex h-[581px] shrink-0">
              <aside className="ml-[7px] mt-[9px] flex w-[166px] shrink-0 flex-col">
                <Panel title="Servers" tw={50} className="h-[158px]">
                  {servers.map(([t, w]) => (
                    <div key={t} className="flex h-[17px] items-center pl-[11px]">
                      <Svg w={12} h={12} className="mb-[3px]"><rect width="12" height="12" fill="#cc4400" /><path d="M6 1.500l4 4.500H7.500v4.500h-3V6H2z" fill="#fff" /></Svg>
                      <div className="ml-[4px] w-[77px]"><Fit low w={w} className="text-[11px] leading-[17px]">{t}</Fit></div>
                      <Fit low w={35} className="text-[11px] leading-[17px]">[stop]</Fit>
                    </div>
                  ))}
                </Panel>
                <Panel title="Options" tw={49} className="mt-[19px] h-[209px]"><LinkList items={options} /></Panel>
                <Panel title="Reports" tw={50} className="mt-[19px] h-[158px]"><LinkList items={reports} /></Panel>
              </aside>
              <MainArea />
            </div>
            <footer className="flex h-[29px] shrink-0 items-center justify-center bg-[#003399] text-white"><Fit w={266} className="text-[10px] font-bold leading-[14px]">Copyrights © 2006 SAMBA. All rights reserved.</Fit></footer>
          </div>

          <div className="flex flex-1 items-center border-t border-[#a09c8c] bg-[linear-gradient(to_bottom,#dedbc9,#ece9d8_4px)] pl-[2px] pt-px font-['Open_Sans',Tahoma,sans-serif]">
            <IeIcon s={16} />
            <div className="ml-[3px]"><Fit w={26} className="text-[11px] leading-[16px]">Done</Fit></div>
            <div className="ml-[742px] flex h-[17px] gap-[22px]"><Sep /><Sep /><Sep /><Sep /><Sep /><Sep /></div>
            <Svg w={17} h={17} className="ml-[3px]"><path d="M6 2h10v9H7z" fill="#6cb8f0" stroke="#e0e8f0" strokeWidth="1.200" /><path d="M9 12h4l2 4H9z" fill="#8898a8" /><circle cx="5" cy="5" r="4.600" fill="#2f7cd8" /><path d="M2 3l4-2 1 4-3 3z" fill="#48b048" /></Svg>
            <div className="ml-[2px]"><Fit w={65} className="text-[11px] leading-[16px]">Local intranet</Fit></div>
            <Svg w={12} h={12} className="ml-auto mt-[6px]"><path d="M8 1h2v2H8zM8 5h2v2H8zM4 5h2v2H4zM8 9h2v2H8zM4 9h2v2H4zM0 9h2v2H0z" fill="#b4b19f" /></Svg>
          </div>
        </div>
        <div className="flex-1 bg-[linear-gradient(to_bottom,#0a5cf0,#00138c)]" />
      </div>
    </div>
  );
}
